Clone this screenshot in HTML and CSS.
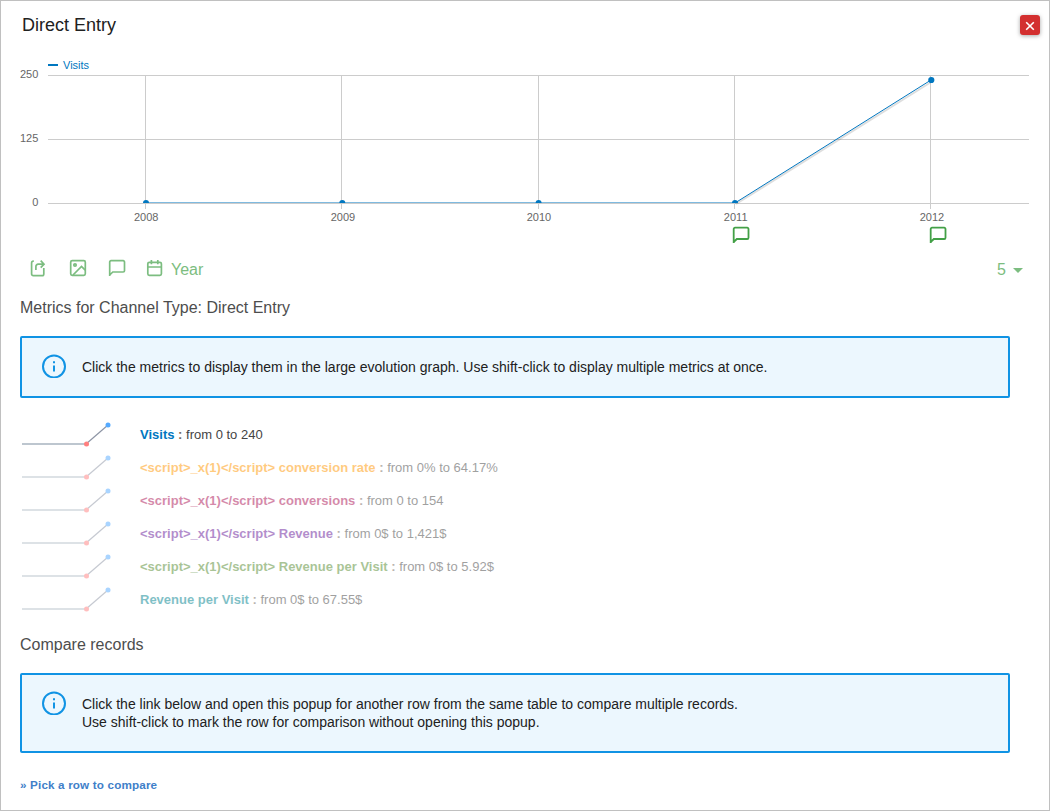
FILE: index.html
```html
<!DOCTYPE html>
<html lang="en">
<head>
<meta charset="utf-8">
<title>Direct Entry</title>
<link rel="stylesheet" href="styles.css">
</head>
<body>
<svg class="defs" aria-hidden="true">
  <symbol id="note" viewBox="0 0 18 18"><path d="M1.700 17V3A1.300 1.300 0 0 1 3 1.700h12.200A1.300 1.300 0 0 1 16.500 3v8.700a1.300 1.300 0 0 1-1.300 1.300H4.800L1.700 16"/></symbol>
  <symbol id="info" viewBox="0 0 24 24"><circle cx="12" cy="12.400" r="11"/><path d="M12 11.500v6M12 7.300v2"/></symbol>
  <symbol id="spark" viewBox="0 0 90 26"><path class="spark-flat" d="M0 22H64"/><path class="spark-rise" d="M64 22L86 3"/><circle class="spark-min" cx="64.500" cy="22" r="2.500"/><circle class="spark-max" cx="86" cy="3" r="2.500"/></symbol>
</svg>
<div class="dialog">
  <header class="titlebar">
    <h1 class="title">Direct Entry</h1>
    <button class="close" aria-label="Close"><svg width="20" height="20" viewBox="0 0 20 20"><path d="M6.200 7.200l7.600 7.600M13.800 7.200l-7.600 7.600"/></svg></button>
  </header>
  <main class="content">
    <svg class="chart" width="1010" height="190" viewBox="20 56 1010 190">
      <path class="grid" d="M48 75.500H1029M48 139.500H1029M48 203.500H1029M145.500 75V209M341.500 75V209M538.500 75V209M734.500 75V209M930.500 75V209"/>
      <path class="series-shadow" d="M736 204L932 81.500"/>
      <path class="series-flat" d="M146 202.500H735"/>
      <path class="series" d="M735 203L931 80"/>
      <g class="points"><path d="M143 203a3 3 0 0 1 6 0zM339.300 203a3 3 0 0 1 6 0zM535.600 203a3 3 0 0 1 6 0zM732 203a3 3 0 0 1 6 0z"/><circle cx="931.300" cy="80" r="3.100"/></g>
      <rect class="legend-mark" x="48" y="64" width="10" height="2"/>
      <text class="legend" x="63" y="69">Visits</text>
      <g class="axis axis-y"><text x="38.300" y="78">250</text><text x="38.300" y="142">125</text><text x="38.300" y="206">0</text></g>
      <g class="axis axis-x"><text x="146.200" y="221">2008</text><text x="343" y="221">2009</text><text x="539" y="221">2010</text><text x="735.700" y="221">2011</text><text x="932" y="221">2012</text></g>
      <use class="annotation" href="#note" x="732" y="226" width="18" height="18"/>
      <use class="annotation" href="#note" x="929" y="226" width="18" height="18"/>
    </svg>
    <div class="toolbar">
      <svg class="tool" width="18" height="18" viewBox="0 0 18 18"><path d="M4.800 2.200H4.300a1.700 1.700 0 0 0-1.700 1.700v11a1.700 1.700 0 0 0 1.700 1.700h8.800a1.700 1.700 0 0 0 1.700-1.700V9M6.900 11V7.500a2.300 2.300 0 0 1 2.300-2.300h5.400M11.700 1.700l3.300 3.500-3.300 3.400"/></svg>
      <svg class="tool tool-image" width="18" height="18" viewBox="0 0 18 18"><rect x="1.700" y="1.700" width="14.600" height="14.600" rx="1.500"/><circle cx="6" cy="6" r="1.200"/><path d="M4 16l8.500-8.500 3.700 3.700"/></svg>
      <svg class="tool tool-note" width="18" height="18"><use href="#note"/></svg>
      <svg class="tool tool-calendar" width="18" height="18" viewBox="0 0 18 18"><rect x="1.800" y="3.300" width="13.600" height="13" rx="1.500"/><path d="M1.800 8h13.600M5.400 1v4.200M11.800 1v4.200"/></svg>
      <span class="period">Year</span>
      <span class="limit">5</span>
      <svg class="caret" width="10" height="5"><path d="M0 0h10L5 5z"/></svg>
    </div>
    <h2 class="heading">Metrics for Channel Type: Direct Entry</h2>
    <div class="alert"><svg class="info" width="24" height="24"><use href="#info"/></svg><p class="message">Click the metrics to display them in the large evolution graph. Use shift-click to display multiple metrics at once.</p></div>
    <ul class="metrics">
      <li class="metric selected"><svg class="spark" width="90" height="26"><use href="#spark"/></svg><p><b class="visits">Visits</b> <b class="colon">:</b> from 0 to 240</p></li>
      <li class="metric"><svg class="spark" width="90" height="26"><use href="#spark"/></svg><p><b class="rate">&lt;script&gt;_x(1)&lt;/script&gt; conversion rate</b> <b class="colon">:</b> from 0% to 64.17%</p></li>
      <li class="metric"><svg class="spark" width="90" height="26"><use href="#spark"/></svg><p><b class="conversions">&lt;script&gt;_x(1)&lt;/script&gt; conversions</b> <b class="colon">:</b> from 0 to 154</p></li>
      <li class="metric"><svg class="spark" width="90" height="26"><use href="#spark"/></svg><p><b class="revenue">&lt;script&gt;_x(1)&lt;/script&gt; Revenue</b> <b class="colon">:</b> from 0$ to 1,421$</p></li>
      <li class="metric"><svg class="spark" width="90" height="26"><use href="#spark"/></svg><p><b class="goal-visit">&lt;script&gt;_x(1)&lt;/script&gt; Revenue per Visit</b> <b class="colon">:</b> from 0$ to 5.92$</p></li>
      <li class="metric"><svg class="spark" width="90" height="26"><use href="#spark"/></svg><p><b class="per-visit">Revenue per Visit</b> <b class="colon">:</b> from 0$ to 67.55$</p></li>
    </ul>
    <h2 class="heading">Compare records</h2>
    <div class="alert"><svg class="info" width="24" height="24"><use href="#info"/></svg><p class="message">Click the link below and open this popup for another row from the same table to compare multiple records.<br>Use shift-click to mark the row for comparison without opening this popup.</p></div>
    <a class="compare" href="#">» Pick a row to compare</a>
  </main>
</div>
</body>
</html>
```
FILE: styles.css
```css
* { box-sizing: border-box; }
body { margin: 0; font-family: "Liberation Sans", Arial, sans-serif; color: #212121; }
h1, h2, p, ul { margin: 0; padding: 0; font-weight: 400; }
.defs { display: none; }
.dialog { width: 1050px; height: 811px; border: 1px solid #c0c0c0; background: #fff; }
.titlebar { display: flex; justify-content: space-between; align-items: flex-start; height: 55px; padding: 14px 9px 0 21px; }
.title { font-size: 18px; line-height: 20px; }
.close { width: 20px; height: 20px; padding: 0; border: 0; border-radius: 3px; background: #d32f2f; box-shadow: 0 1px 4px rgba(0,0,0,.35); }
.close svg { display: block; fill: none; stroke: #fff; stroke-width: 1.6; }
.content { padding-left: 19px; }
.chart { display: block; }
.grid { fill: none; stroke: #ccc; }
.series-shadow { stroke: #000; stroke-opacity: .13; stroke-width: 2; }
.series-flat { stroke: #7fbadf; }
.series { stroke: #0077c0; stroke-width: 1; }
.points, .legend-mark, .legend { fill: #0077c0; }
.legend, .axis { font-size: 11px; }
.axis { fill: #666; }
.axis-y { text-anchor: end; }
.axis-x { text-anchor: middle; }
.annotation { fill: none; stroke: #43a047; stroke-width: 1.8; }
.toolbar { display: flex; align-items: center; height: 44px; padding: 0 26px 0 9px; color: #7cbd80; font-size: 16px; }
.tool { fill: none; stroke: currentColor; stroke-width: 1.7; overflow: visible; }
.tool-image { margin-left: 22px; }
.tool-note { margin-left: 21px; }
.tool-calendar { margin-left: 20px; }
.period { margin-left: 7px; padding-top: 3px; }
.limit { margin: 3px 7px 0 auto; }
.caret { fill: currentColor; margin-top: 5px; width: 10px; }
.heading { height: 46px; padding-top: 8px; font-size: 16px; line-height: 20px; color: #4d4d4d; }
.alert { display: flex; width: 990px; padding: 16px 20px 18px; border: 2px solid #1093e4; border-radius: 2px; background: #ecf7fe; }
.info { flex: none; margin-right: 16px; fill: none; stroke: #1093e4; stroke-width: 2; }
.message { padding: 4px 0 2px; font-size: 14px; line-height: 18px; }
.metrics { list-style: none; padding-top: 20px; height: 229px; }
.metric { display: flex; align-items: center; height: 33px; gap: 28px; padding-left: 2px; font-size: 13px; color: #444; opacity: .5; }
.selected { opacity: 1; }
.spark-flat { stroke: #bdc6cf; stroke-width: 2; }
.spark-rise { stroke: #8e95a5; stroke-width: 1.2; }
.spark-min { fill: #ff7f7f; }
.spark-max { fill: #55aaff; }
.visits { color: #0077c0; }
.rate { color: #ff9800; }
.conversions { color: #ad1457; }
.revenue { color: #6a1b9a; }
.goal-visit { color: #558b2f; }
.per-visit { color: #00838f; }
.colon { color: #776a60; }
.compare { display: inline-block; margin-top: 25px; color: #3f80c9; font-size: 11.7px; font-weight: 700; line-height: 14px; letter-spacing: .15px; text-decoration: none; }
```
